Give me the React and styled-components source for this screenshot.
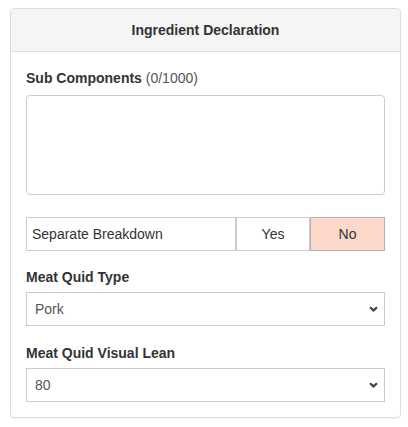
import React, { useState } from 'react'
import styled, { createGlobalStyle } from 'styled-components'

const GlobalStyle = createGlobalStyle`
    html, body {
        margin: 0;
        padding: 0;
        background: #fff;
    }
    body {
        font-family: "Liberation Sans", Arial, sans-serif;
        font-size: 14px;
        color: #333;
    }
`

const Page = styled.div`
    padding: 8px 7px 9px 10px;
`

const Panel = styled.div`
    border: 1px solid #ddd;
    border-radius: 4px;
    background: #fff;
    box-shadow: 0 1px 1px rgba(0, 0, 0, 0.05);
`

const PanelHeading = styled.div`
    background: #f5f5f5;
    border-bottom: 1px solid #ddd;
    border-radius: 3px 3px 0 0;
    padding: 11px 15px;
    line-height: 20px;
    font-size: 14px;
    font-weight: bold;
    text-align: center;
    color: #333;
`

const PanelBody = styled.div`
    padding: 16px 15px 15px 15px;
`

const Group = styled.div`
    margin-bottom: ${props => props.gap || 16}px;
    &:last-child {
        margin-bottom: 0;
    }
`

const Label = styled.div`
    font-weight: bold;
    line-height: 20px;
    margin-bottom: ${props => props.space || 5}px;
    color: #333;
`

const Counter = styled.span`
    font-weight: normal;
    color: #555;
`

const TextArea = styled.textarea`
    display: block;
    box-sizing: border-box;
    width: 100%;
    height: 100px;
    border: 1px solid #ccc;
    border-radius: 4px;
    resize: none;
    padding: 6px 8px;
    font-family: inherit;
    font-size: 14px;
    outline: none;
`

const Toggle = styled.div`
    display: flex;
    height: 34px;
    box-sizing: border-box;
`

const ToggleLabel = styled.div`
    flex: 1;
    display: flex;
    align-items: center;
    padding-left: 5px;
    border: 1px solid #ccc;
    color: #333;
`

const ToggleOption = styled.button`
    width: ${props => props.w}px;
    flex: none;
    box-sizing: border-box;
    border: 1px solid ${props => props.active ? '#b8b2af' : '#ccc'};
    border-left-width: ${props => props.active ? 1 : 2}px;
    margin-left: ${props => props.active ? 0 : -1}px;
    background: ${props => props.active ? '#fbd8ca' : '#fff'};
    font-family: inherit;
    font-size: 14px;
    color: #333;
    padding: 0;
    cursor: pointer;
`

const SelectWrap = styled.div`
    position: relative;
`

const Select = styled.select`
    display: block;
    width: 100%;
    height: 34px;
    box-sizing: border-box;
    border: 1px solid #ccc;
    border-radius: 0;
    background: #fff;
    appearance: none;
    padding: 0 30px 0 8px;
    font-family: inherit;
    font-size: 14px;
    color: #555;
    outline: none;
`

const Chevron = styled.svg`
    position: absolute;
    right: 7px;
    top: 50%;
    margin-top: -3px;
    pointer-events: none;
`

const Dropdown = ({ value, options }) => (
    <SelectWrap>
        <Select defaultValue={value}>
            {options.map(o => <option key={o}>{o}</option>)}
        </Select>
        <Chevron width="9" height="6" viewBox="0 0 9 6">
            <path d="M1 1.2 L4.5 4.4 L8 1.2" fill="none" stroke="#444" strokeWidth="2.2" />
        </Chevron>
    </SelectWrap>
)

export default function App() {
    const [breakdown, setBreakdown] = useState(false)
    return (
        <Page>
            <GlobalStyle />
            <Panel>
                <PanelHeading>Ingredient Declaration</PanelHeading>
                <PanelBody>
                    <Group gap={22}>
                        <Label space={7}>Sub Components <Counter>(0/1000)</Counter></Label>
                        <TextArea />
                    </Group>
                    <Group gap={16}>
                        <Toggle>
                            <ToggleLabel>Separate Breakdown</ToggleLabel>
                            <ToggleOption w={75} active={breakdown} onClick={() => setBreakdown(true)}>Yes</ToggleOption>
                            <ToggleOption w={75} active={!breakdown} onClick={() => setBreakdown(false)}>No</ToggleOption>
                        </Toggle>
                    </Group>
                    <Group gap={17}>
                        <Label>Meat Quid Type</Label>
                        <Dropdown value="Pork" options={['Beef', 'Pork', 'Lamb', 'Chicken']} />
                    </Group>
                    <Group>
                        <Label>Meat Quid Visual Lean</Label>
                        <Dropdown value="80" options={['60', '70', '80', '90', '95']} />
                    </Group>
                </PanelBody>
            </Panel>
        </Page>
    )
}
